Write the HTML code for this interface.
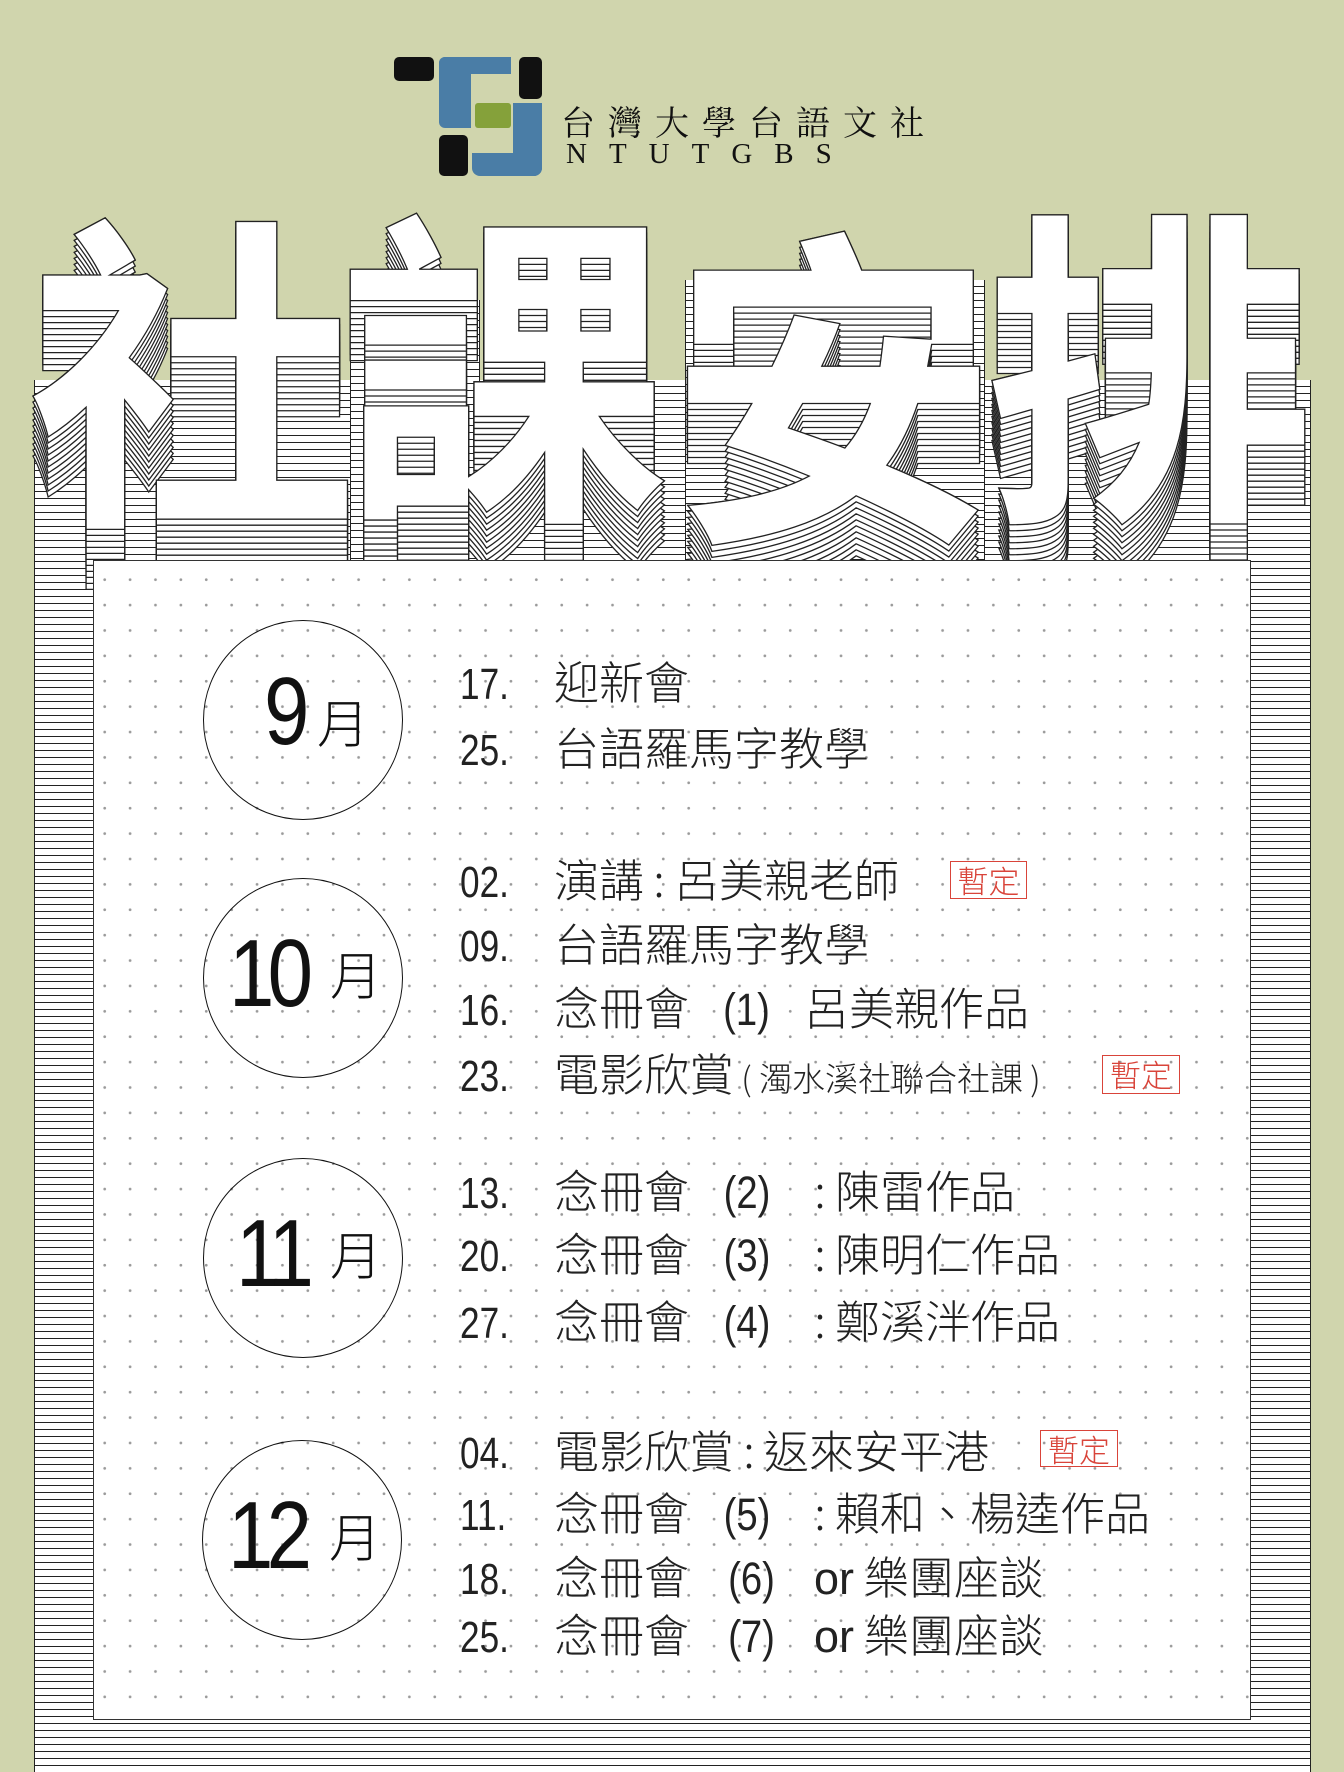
<!DOCTYPE html>
<html><head><meta charset="utf-8"><style>
*{margin:0;padding:0;box-sizing:border-box}
body{width:1344px;height:1772px;background:#d0d5ad;position:relative;overflow:hidden;font-family:"Liberation Sans","Noto Sans CJK TC",sans-serif}
.lines{position:absolute;background:repeating-linear-gradient(to bottom,#fff 0 6px,#222 6px 7px);border-left:1px solid #222;border-right:1px solid #222}
.b{position:absolute}
#card{position:absolute;left:93px;top:560px;width:1158px;height:1160px;background-color:#fff;border:1.5px solid #333;
background-image:radial-gradient(circle,#9a9a9a 1.2px,transparent 1.6px);background-size:25.4px 25.4px;background-position:-2px 6px}
.circ{position:absolute;width:200px;height:200px;border:1.5px solid #111;border-radius:50%}
.circ .n{position:absolute;font-family:"Liberation Sans",sans-serif;font-size:96px;color:#111;letter-spacing:-8px;transform:scaleX(.85);transform-origin:left}
.circ .m{position:absolute;font-family:"Noto Sans CJK TC",sans-serif;font-weight:300;font-size:52px;color:#111}
.row{position:absolute;left:460px;font-family:"Noto Sans CJK TC",sans-serif;font-weight:300;font-size:45px;color:#222;white-space:nowrap;line-height:50px}
.row .d{display:inline-block;width:94px;font-family:"Liberation Sans",sans-serif;font-weight:normal;font-size:44px;transform:scaleX(.8);transform-origin:left}
.row .s{font-size:33px}
.p{display:inline-block;width:116px;text-align:center;font-family:"Liberation Sans",sans-serif;font-weight:normal;transform:scaleX(.85)}
.c{display:inline-block;width:30px;text-align:center}
.tag{position:absolute;border:1.5px solid #d9443a;color:#d9443a;font-family:"Noto Sans CJK TC",sans-serif;font-weight:300;font-size:31px;line-height:35px;text-align:center}
</style></head><body>
<!-- logo -->
<div class="b" style="left:394px;top:57px;width:40px;height:24px;background:#111;border-radius:5px"></div>
<div class="b" style="left:439px;top:57px;width:32px;height:71px;background:#4a7da6;border-radius:6px 0 0 6px"></div>
<div class="b" style="left:439px;top:57px;width:72px;height:17px;background:#4a7da6;border-radius:6px 0 0 0"></div>
<div class="b" style="left:519px;top:57px;width:23px;height:42px;background:#111;border-radius:5px"></div>
<div class="b" style="left:475px;top:103px;width:36px;height:25px;background:#85a13a;border-radius:3px"></div>
<div class="b" style="left:439px;top:135px;width:29px;height:41px;background:#111;border-radius:5px"></div>
<div class="b" style="left:513px;top:103px;width:29px;height:73px;background:#4a7da6;border-radius:0 0 8px 0"></div>
<div class="b" style="left:472px;top:153px;width:70px;height:23px;background:#4a7da6;border-radius:0 0 8px 8px"></div>
<div class="b" style="left:561px;top:96px;font-family:'Noto Serif CJK SC','Noto Sans CJK TC',serif;font-size:34px;letter-spacing:13px;color:#111">台灣大學台語文社</div>
<div class="b" style="left:566px;top:138px;font-family:'Liberation Serif',serif;font-size:29px;letter-spacing:22px;color:#111">NTUTGBS</div>
<!-- title stacks -->
<div class="lines" style="left:34px;top:380px;width:1277px;height:1392px"></div>
<div class="lines" style="left:350px;top:300px;width:130px;height:400px"></div>
<div class="lines" style="left:685px;top:280px;width:300px;height:400px"></div>
<svg style="position:absolute;left:0;top:0" width="1344" height="800">
<g font-family="Noto Sans CJK TC" font-weight="700" font-size="330" fill="#fff" stroke="#222" stroke-width="1.3">
<g id="t">
<text x="28" y="500">社</text>
<text x="340" y="495">課</text>
<text x="668" y="515">安</text>
<text x="985" y="495">排</text>
</g>
<use href="#t" y="60"/><use href="#t" y="54"/><use href="#t" y="48"/><use href="#t" y="42"/><use href="#t" y="36"/><use href="#t" y="30"/><use href="#t" y="24"/><use href="#t" y="18"/><use href="#t" y="12"/><use href="#t" y="6"/>
<text x="28" y="500">社</text>
<text x="340" y="495">課</text>
<text x="668" y="515">安</text>
<text x="985" y="495">排</text>
</g></svg>
<div id="card"></div>
<div class="circ" style="left:203px;top:620px"><span class="n" style="left:60px;top:36px">9</span><span class="m" style="left:113px;top:62px">月</span></div>
<div class="circ" style="left:203px;top:878px"><span class="n" style="left:25px;top:40px">10</span><span class="m" style="left:126px;top:56px">月</span></div>
<div class="circ" style="left:203px;top:1158px"><span class="n" style="left:32px;top:40px">11</span><span class="m" style="left:126px;top:56px">月</span></div>
<div class="circ" style="left:202px;top:1440px"><span class="n" style="left:25px;top:40px">12</span><span class="m" style="left:126px;top:56px">月</span></div>
<div class="row" style="top:655px"><span class="d">17.</span>迎新會</div>
<div class="row" style="top:721px"><span class="d">25.</span>台語羅馬字教學</div>
<div class="row" style="top:853px"><span class="d">02.</span>演講<span class="c">:</span>呂美親老師</div>
<div class="tag" style="left:950px;top:861px;width:77px;height:38px">暫定</div>
<div class="row" style="top:917px"><span class="d">09.</span>台語羅馬字教學</div>
<div class="row" style="top:981px"><span class="d">16.</span>念冊會<span class="p" style="width:115px">(1)</span>呂美親作品</div>
<div class="row" style="top:1047px"><span class="d">23.</span>電影欣賞<span class="s"> ( 濁水溪社聯合社課 )</span></div>
<div class="tag" style="left:1102px;top:1055px;width:78px;height:39px">暫定</div>
<div class="row" style="top:1164px"><span class="d">13.</span>念冊會<span class="p">(2)</span><span class="c">:</span>陳雷作品</div>
<div class="row" style="top:1227px"><span class="d">20.</span>念冊會<span class="p">(3)</span><span class="c">:</span>陳明仁作品</div>
<div class="row" style="top:1294px"><span class="d">27.</span>念冊會<span class="p">(4)</span><span class="c">:</span>鄭溪泮作品</div>
<div class="row" style="top:1424px"><span class="d">04.</span>電影欣賞<span class="c">:</span>返來安平港</div>
<div class="tag" style="left:1040px;top:1430px;width:78px;height:37px">暫定</div>
<div class="row" style="top:1486px"><span class="d">11.</span>念冊會<span class="p">(5)</span><span class="c">:</span>賴和、楊逵作品</div>
<div class="row" style="top:1550px"><span class="d">18.</span>念冊會<span class="p" style="width:125px">(6)</span><span style="font-family:'Liberation Sans'">or</span> 樂團座談</div>
<div class="row" style="top:1608px"><span class="d">25.</span>念冊會<span class="p" style="width:125px">(7)</span><span style="font-family:'Liberation Sans'">or</span> 樂團座談</div>
</body></html>
